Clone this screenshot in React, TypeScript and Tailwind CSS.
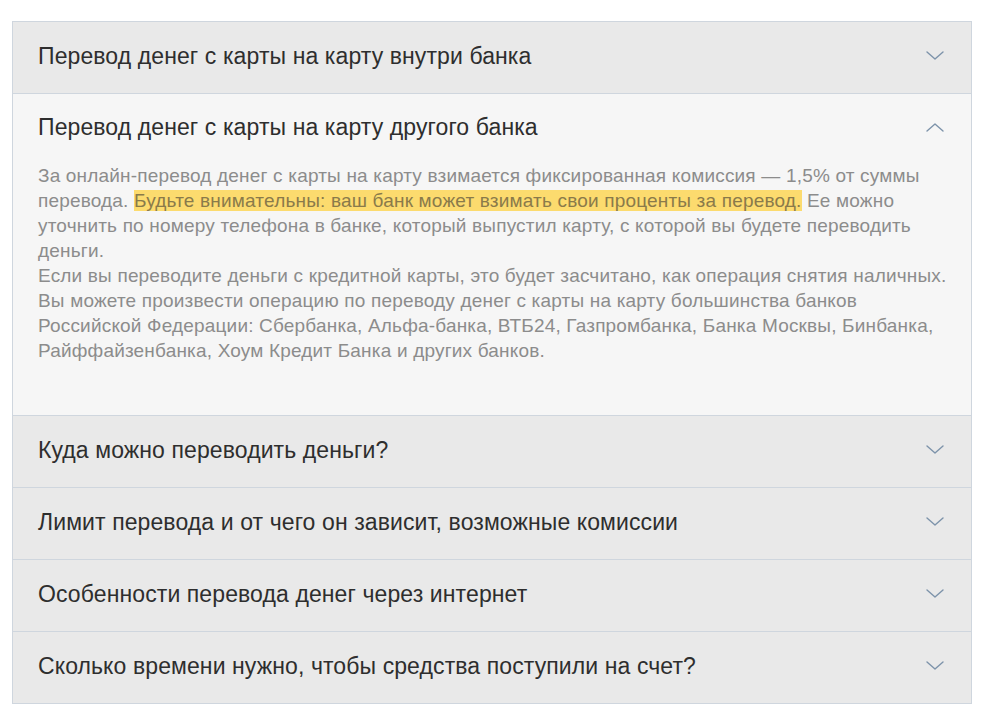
import React from "react";

const items = [
  "Перевод денег с карты на карту внутри банка",
  "Перевод денег с карты на карту другого банка",
  "Куда можно переводить деньги?",
  "Лимит перевода и от чего он зависит, возможные комиссии",
  "Особенности перевода денег через интернет",
  "Сколько времени нужно, чтобы средства поступили на счет?",
];

function Chevron({ up }: { up?: boolean }) {
  return (
    <svg width="18" height="10" viewBox="0 0 18 10" fill="none" className="shrink-0">
      <path
        d={up ? "M1 9L9 2l8 7" : "M1 1l8 7 8-7"}
        stroke="#7d93aa"
        strokeWidth="1.4"
        strokeLinecap="round"
        strokeLinejoin="round"
      />
    </svg>
  );
}

export default function App() {
  return (
    <div className="min-h-screen bg-white pt-[21px] pl-[12px] font-['Liberation_Sans',Arial,sans-serif]">
      <div className="w-[960px] border border-[#cfd6de]">
        {items.map((title, i) => {
          const open = i === 1;
          return (
            <div
              key={title}
              className={`${i > 0 ? "border-t border-[#cfd6de]" : ""} ${open ? "bg-[#f6f6f6]" : "bg-[#e9e9e9]"}`}
            >
              <div className={`flex items-center justify-between pl-[25px] pr-[27px] pb-[3px] ${open ? "h-[69px]" : "h-[71px]"}`}>
                <span className="text-[23px] leading-[28px] text-[#2e2e2e] tracking-[0.1px]">{title}</span>
                <Chevron up={open} />
              </div>
              {open && (
                <div className="pl-[25px] pr-[10px] pb-[52px] text-[19px] leading-[25px] text-[#8c8c8c] tracking-[0.18px] whitespace-nowrap">
                  За онлайн-перевод денег с карты на карту взимается фиксированная комиссия — 1,5% от суммы
                  <br />
                  перевода.{" "}
                  <span className="bg-[#fcdb6e] text-[#8a7a4a]">
                    Будьте внимательны: ваш банк может взимать свои проценты за перевод.
                  </span>{" "}
                  Ее можно
                  <br />
                  уточнить по номеру телефона в банке, который выпустил карту, с которой вы будете переводить
                  <br />
                  деньги.
                  <br />
                  Если вы переводите деньги с кредитной карты, это будет засчитано, как операция снятия наличных.
                  <br />
                  Вы можете произвести операцию по переводу денег с карты на карту большинства банков
                  <br />
                  Российской Федерации: Сбербанка, Альфа-банка, ВТБ24, Газпромбанка, Банка Москвы, Бинбанка,
                  <br />
                  Райффайзенбанка, Хоум Кредит Банка и других банков.
                </div>
              )}
            </div>
          );
        })}
      </div>
    </div>
  );
}
